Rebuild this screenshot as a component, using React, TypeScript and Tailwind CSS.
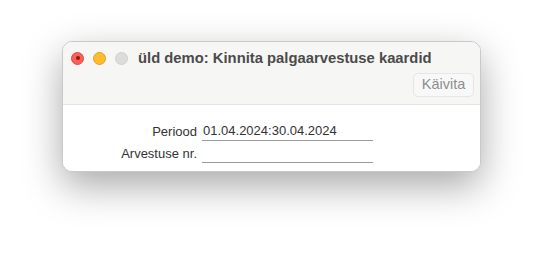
import React from "react";

export default function App() {
  return (
    <div className="w-[542px] h-[254px] bg-white overflow-hidden" style={{ fontFamily: '"Liberation Sans", Arial, sans-serif' }}>
      <div className="pt-[41px] pl-[62px]">
        <div className="w-[419px] h-[131px] rounded-[10px] bg-white border border-[#c9c9c9] shadow-[0_14px_38px_rgba(0,0,0,0.34)] overflow-hidden flex flex-col">
          <div className="h-[63px] bg-[#f6f7f5] border-b border-[#e4e5e3] flex flex-col">
            <div className="h-[31px] flex items-center pl-[8px]">
              <div className="flex items-center gap-[9px] pt-[1px]">
                <div className="w-[13px] h-[13px] rounded-full bg-[#fe5f57] border border-[#e14942] flex items-center justify-center">
                  <div className="w-[4px] h-[4px] rounded-full bg-[#8a1a14]" />
                </div>
                <div className="w-[13px] h-[13px] rounded-full bg-[#febc2e] border border-[#e0a125]" />
                <div className="w-[13px] h-[13px] rounded-full bg-[#dcdcdc] border border-[#cfcfcf]" />
              </div>
              <div className="ml-[10px] text-[14.8px] font-bold text-[#4b4b4b] leading-none pt-[2px]">
                üld demo: Kinnita palgaarvestuse kaardid
              </div>
            </div>
            <div className="flex justify-end pr-[6px]">
              <div className="h-[24px] w-[61px] rounded-[5px] border border-[#e6e6e6] bg-[#f8f8f8] flex items-center justify-center text-[14.5px] text-[#8e8e8e]">
                Käivita
              </div>
            </div>
          </div>
          <div className="flex-1 bg-white pt-[18px]">
            <div className="grid grid-cols-[134px_171px] gap-x-[5px] gap-y-[4px] items-end text-[13px] text-[#333]">
              <div className="text-right leading-[15px] pb-[2px]">Periood</div>
              <div className="border-b border-[#9a9a9a] leading-[15px] pb-[2px] pl-[1px] h-[18px] flex items-end">01.04.2024:30.04.2024</div>
              <div className="text-right leading-[15px] pb-[2px]">Arvestuse nr.</div>
              <div className="border-b border-[#9a9a9a] h-[18px]" />
            </div>
          </div>
        </div>
      </div>
    </div>
  );
}
